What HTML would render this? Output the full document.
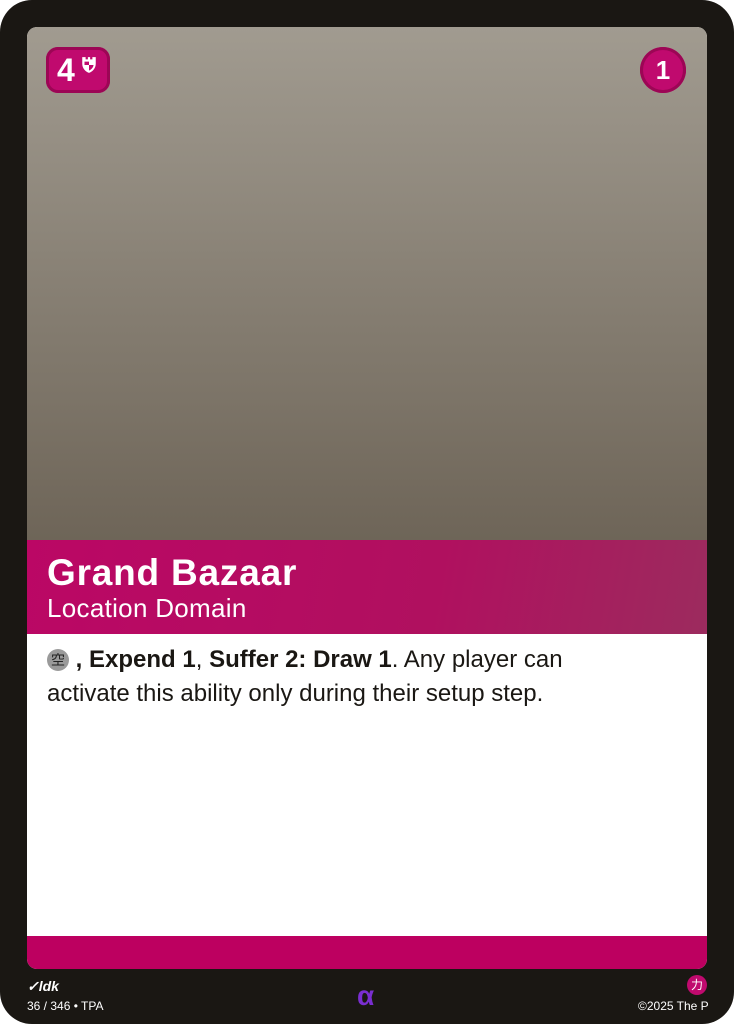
<!DOCTYPE html>
<html><head><meta charset="utf-8"><style>
body{margin:0;width:734px;height:1024px;background:#fff;font-family:"Liberation Sans",sans-serif;overflow:hidden}
.card{position:absolute;left:0;top:0;width:734px;height:1024px;background:#1a1713;border-radius:32px;overflow:hidden}
.inner{position:absolute;left:27px;top:27px;width:680px;height:942px;border-radius:10px;overflow:hidden;background:#fff}
.art{position:absolute;left:0;top:0;width:680px;height:513px;background:linear-gradient(#a19b90,#6e6558)}
.band{position:absolute;left:0;top:513px;width:680px;height:94px;background:linear-gradient(100deg,#bb0765 0%,#b0105f 60%,#9c2b5e 100%)}
.title{position:absolute;left:20px;top:12px;color:#fff;font-weight:bold;font-size:37px;letter-spacing:0.8px}
.sub{position:absolute;left:20px;top:53px;color:#fff;font-size:26px;letter-spacing:0.3px}
.text{position:absolute;left:20px;top:616px;width:570px;color:#1a1713;font-size:24px;line-height:34px}
.bottom{position:absolute;left:0;top:909px;width:680px;height:33px;background:#bd0060}
.cost{position:absolute;left:46px;top:47px;width:64px;height:46px;border-radius:12px;background:#c00a6e;box-shadow:inset 0 0 0 3px #9c0655;color:#fff;font-weight:bold;font-size:32px}
.pw{position:absolute;left:640px;top:47px;width:46px;height:46px;border-radius:50%;background:#c00a6e;box-shadow:inset 0 0 0 3px #9c0655;color:#fff;font-weight:bold;font-size:26px;text-align:center;line-height:46px}
.ic{display:inline-block;width:22px;height:22px;border-radius:50%;background:#9a9a9a;font-size:14px;color:#222;text-align:center;line-height:22px;vertical-align:2px;font-family:"Noto Sans CJK JP",sans-serif}
.f{position:absolute;color:#fff;font-size:12px}
</style></head><body><div class="card">
<div class="inner">
<div class="art"></div>
<div class="band"><div class="title">Grand Bazaar</div><div class="sub">Location Domain</div></div>
<div class="text"><span class="ic">空</span> <b>, Expend 1</b>, <b>Suffer 2: Draw 1</b>. Any player can activate this ability only during their setup step.</div>
<div class="bottom"></div>
</div>
<div class="cost"><span style="position:absolute;left:11px;top:5px">4</span>
<svg style="position:absolute;left:35px;top:9px" width="16" height="18" viewBox="0 0 14 16"><path d="M1 1h3v2h2V1h2v2h2V1h3v6c0 4-3 7-6 8-3-1-6-4-6-8z" fill="#fff"/><path d="M7 8h4c0 2-2 4-4 5zM3 5h4v3H3z" fill="#c00a6e"/></svg></div>
<div class="pw">1</div>
<div class="f" style="left:27px;top:978px;font-style:italic;font-weight:bold;font-size:14px">✓ldk</div>
<div class="f" style="left:27px;top:999px;font-size:12px">36 / 346 • TPA</div>
<div style="position:absolute;left:357px;top:980px;color:#7a2ed0;font-size:28px;font-weight:bold">α</div>
<div style="position:absolute;left:687px;top:975px;width:20px;height:20px;border-radius:50%;background:#c00a6e;color:#fff;font-size:12px;text-align:center;line-height:20px;font-family:'Noto Sans CJK JP',sans-serif">力</div>
<div class="f" style="left:638px;top:999px;font-size:12px">©2025 The P</div>
</div></body></html>
